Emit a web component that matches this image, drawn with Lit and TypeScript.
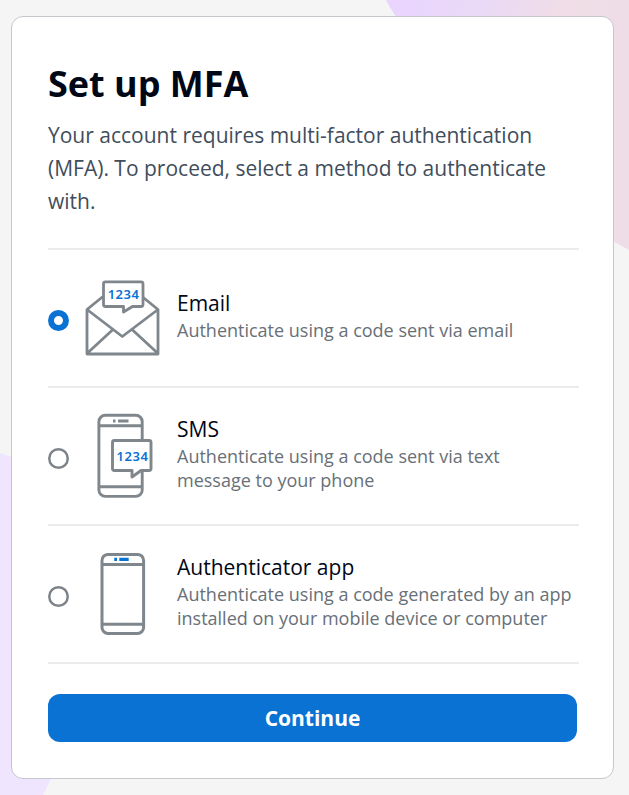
import { LitElement, html, css, svg } from "lit";
import { customElement, property, state } from "lit/decorators.js";
import { classMap } from "lit/directives/class-map.js";

const emailIcon = svg`
  <svg class="icon" viewBox="0 0 84 100" width="84" height="100">
    <g fill="none" stroke="#7f868c" stroke-width="2.8" stroke-linejoin="round">
      <path d="M7 40.500 42.300 67.500 78 40.500M7 84.500 33.500 60M78 84.500 51.500 60M23 27.500 7 40.500V85H78V40.500L62 27.500" />
      <path fill="#fff" d="M25.500 12.800H61Q63 12.800 63 14.800V35.500Q63 37.500 61 37.500H52.500L43.500 43V37.500H25.500Q23.500 37.500 23.500 35.500V14.800Q23.500 12.800 25.500 12.800Z" />
    </g>
    <text x="27.700" y="29.500">1234</text>
  </svg>`;

const smsIcon = svg`
  <svg class="icon" viewBox="0 0 84 100" width="84" height="100">
    <g fill="none" stroke="#7f868c" stroke-width="2.900" stroke-linejoin="round">
      <rect x="18.900" y="8.200" width="43.300" height="81.200" rx="6.500" />
      <path d="M19 18.800H62M19 79.800H62" />
      <path fill="#fff" d="M34.500 33.500H69Q71 33.500 71 35.500V61.500Q71 63.500 69 63.500H61L52 70V63.500H34.500Q32.500 63.500 32.500 61.500V35.500Q32.500 33.500 34.500 33.500Z" />
    </g>
    <path d="M33 12.500H35.500V15.500H33ZM38 12.500H48.500V15.500H38Z" fill="#7f868c" />
    <text x="36.600" y="54">1234</text>
  </svg>`;

const appIcon = svg`
  <svg class="icon" viewBox="0 0 84 100" width="84" height="100">
    <g fill="none" stroke="#7f868c" stroke-width="3">
      <rect x="22" y="9.400" width="41.600" height="79" rx="6" />
      <path d="M22 19.600H63.500M22 79.200H63.500" />
    </g>
    <path d="M34.300 12.800H37V16H34.300ZM39.300 12.800H48.700V16H39.300Z" fill="#0972d3" />
  </svg>`;

const methods = [
  { id: "email", title: "Email", text: "Authenticate using a code sent via email", icon: emailIcon },
  { id: "sms", title: "SMS", text: "Authenticate using a code sent via text message to your phone", icon: smsIcon },
  {
    id: "app",
    title: "Authenticator app",
    text: "Authenticate using a code generated by an app installed on your mobile device or computer",
    icon: appIcon,
  },
];

@customElement("mfa-option")
class MfaOption extends LitElement {
  @property({ attribute: false }) method = methods[0];
  @property({ type: Boolean }) checked = false;

  static styles = css`
    :host {
      display: flex;
      align-items: center;
      height: 136px;
      border-bottom: 2px solid #e9ebed;
      cursor: pointer;
    }
    .radio {
      flex: none;
      width: 21px;
      height: 21px;
      margin-top: 5px;
      border-radius: 50%;
      background: #fff;
      box-shadow: inset 0 0 0 2.5px #7d8389;
    }
    .radio.checked {
      box-shadow: inset 0 0 0 6px #0972d3;
    }
    .icon {
      flex: none;
      display: block;
      margin: 2px 0 0 11px;
    }
    .icon text {
      font: 600 13px "Noto Sans", "Open Sans", sans-serif;
      letter-spacing: 0.5px;
      fill: #0972d3;
    }
    .copy {
      margin: 0 4px 6px 13px;
      min-width: 0;
    }
    .title {
      font-size: 21px;
      line-height: 28px;
      padding-bottom: 1px;
      color: #000716;
    }
    .text {
      font-size: 18px;
      line-height: 24px;
      color: #687078;
    }
  `;

  render() {
    return html`
      <span class=${classMap({ radio: true, checked: this.checked })}></span>
      ${this.method.icon}
      <div class="copy">
        <div class="title">${this.method.title}</div>
        <div class="text">${this.method.text}</div>
      </div>
    `;
  }
}

@customElement("app-root")
class AppRoot extends LitElement {
  @state() selected = "email";

  static styles = css`
    :host {
      display: block;
      position: relative;
      box-sizing: border-box;
      height: 795px;
      padding: 16px 15px 16px 11px;
      overflow: hidden;
      background: #f5f5f5;
      font-family: "Open Sans", "Noto Sans", sans-serif;
    }
    .backdrop {
      position: absolute;
      inset: 0;
    }
    .card {
      position: relative;
      box-sizing: border-box;
      height: 763px;
      padding: 45px 34px 0 36px;
      border: 1px solid #c6c6cd;
      border-radius: 12px;
      background: #fff;
    }
    h1 {
      margin: 0;
      font-size: 36px;
      line-height: 44px;
      font-weight: 700;
      color: #000716;
    }
    .intro {
      margin: 13px 0 0;
      padding-bottom: 30px;
      border-bottom: 2px solid #e9ebed;
      font-size: 21px;
      line-height: 33px;
      color: #414d5c;
    }
    button {
      display: block;
      width: 529px;
      height: 48px;
      margin-top: 30px;
      padding: 0;
      border: 0;
      border-radius: 12px;
      background: #0972d3;
      color: #fff;
      font: 700 21px "Open Sans", "Noto Sans", sans-serif;
      cursor: pointer;
    }
  `;

  render() {
    return html`
      <svg class="backdrop" viewBox="0 0 629 795" width="629" height="795">
        <defs>
          <linearGradient id="glow" gradientUnits="userSpaceOnUse" x1="386" y1="0" x2="600" y2="60">
            <stop offset="0" stop-color="#e9d4ff" />
            <stop offset="0.400" stop-color="#ead9f7" />
            <stop offset="0.800" stop-color="#f0dde6" />
            <stop offset="1" stop-color="#eedde7" />
          </linearGradient>
        </defs>
        <path d="M386 0 Q390 8 396 17 L600 234 L629 250V0Z" fill="url(#glow)" />
        <path d="M0 453 L20 460 L70 740 Q53 775 43 795H0Z" fill="#efe5ff" />
      </svg>
      <main class="card">
        <h1>Set up MFA</h1>
        <p class="intro">
          Your account requires multi-factor authentication (MFA). To proceed, select a method to authenticate with.
        </p>
        ${methods.map(
          (m) => html`<mfa-option
            .method=${m}
            .checked=${this.selected === m.id}
            @click=${() => (this.selected = m.id)}
          ></mfa-option>`
        )}
        <button>Continue</button>
      </main>
    `;
  }
}
